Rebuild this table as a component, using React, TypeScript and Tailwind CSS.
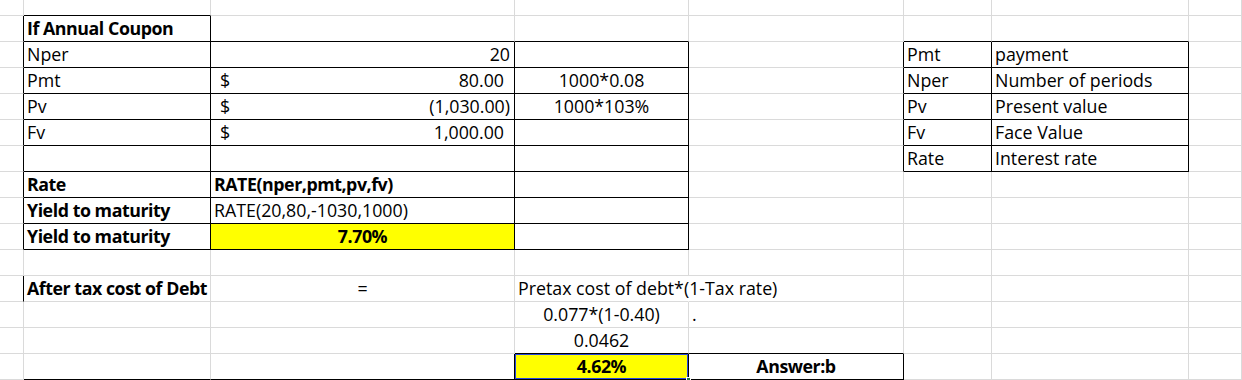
const COLS = [24, 187, 304, 174, 215, 88, 197, 53]
const ROWS = 15

type Cell = {
  text?: string
  money?: string
  align?: 'left' | 'right' | 'center'
  bold?: boolean
  yellow?: boolean
  pr?: string
}

const CELLS: Record<string, Cell> = {
  '1-1': { text: 'If Annual Coupon', bold: true },
  '2-1': { text: 'Nper' },
  '2-2': { text: '20', align: 'right', pr: 'pr-[4px]' },
  '3-1': { text: 'Pmt' },
  '3-2': { money: '80.00', pr: 'pr-[10px]' },
  '3-3': { text: '1000*0.08', align: 'center' },
  '4-1': { text: 'Pv' },
  '4-2': { money: '(1,030.00)', pr: 'pr-[4px]' },
  '4-3': { text: '1000*103%', align: 'center' },
  '5-1': { text: 'Fv' },
  '5-2': { money: '1,000.00', pr: 'pr-[10px]' },
  '7-1': { text: 'Rate', bold: true },
  '7-2': { text: 'RATE(nper,pmt,pv,fv)', bold: true },
  '8-1': { text: 'Yield to maturity', bold: true },
  '8-2': { text: 'RATE(20,80,-1030,1000)' },
  '9-1': { text: 'Yield to maturity', bold: true },
  '9-2': { text: '7.70%', bold: true, align: 'center', yellow: true },
  '11-1': { text: 'After tax cost of Debt', bold: true },
  '11-2': { text: '=', align: 'center' },
  '11-3': { text: 'Pretax cost of debt*(1-Tax rate)' },
  '12-3': { text: '0.077*(1-0.40)', align: 'center' },
  '12-4': { text: '.' },
  '13-3': { text: '0.0462', align: 'center' },
  '14-3': { text: '4.62%', bold: true, align: 'center', yellow: true },
  '14-4': { text: 'Answer:b', bold: true, align: 'center' },
  '2-5': { text: 'Pmt' },
  '2-6': { text: 'payment' },
  '3-5': { text: 'Nper' },
  '3-6': { text: 'Number of periods' },
  '4-5': { text: 'Pv' },
  '4-6': { text: 'Present value' },
  '5-5': { text: 'Fv' },
  '5-6': { text: 'Face Value' },
  '6-5': { text: 'Rate' },
  '6-6': { text: 'Interest rate' }
}

const between = (v: number, a: number, b: number) => v >= a && v <= b

// black right edge of cell (r, c)
function blackRight(r: number, c: number) {
  if (c === 0) return between(r, 1, 9) || r === 11
  if (c === 1) return between(r, 1, 9)
  if (c === 2 || c === 3) return between(r, 2, 9) || r === 14
  if (c === 4) return between(r, 2, 6) || r === 14
  if (c === 5 || c === 6) return between(r, 2, 6)
  return false
}

// black bottom edge of cell (r, c)
function blackBottom(r: number, c: number) {
  if (r === 0) return c === 1
  if (between(r, 1, 9) && between(c, 1, 3)) return true
  if (between(r, 1, 6) && (c === 5 || c === 6)) return true
  if (r === 13) return c === 3 || c === 4
  if (r === 14) return between(c, 1, 4)
  return false
}

function GridCell({ r, c }: { r: number; c: number }) {
  const cell = CELLS[`${r}-${c}`]
  const right = r === 11 && c === 3 ? 'border-r-transparent' : blackRight(r, c) ? 'border-r-black' : 'border-r-[#dadada]'
  const bottom = blackBottom(r, c) ? 'border-b-black' : 'border-b-[#dadada]'
  const selected = r === 14 && c === 3

  const align =
    cell?.align === 'right' ? 'justify-end' : cell?.align === 'center' ? 'justify-center' : 'justify-start'

  return (
    <div
      className={`relative flex border-r border-b ${right} ${bottom} ${cell?.yellow ? 'bg-[#ffff00]' : ''} ${
        selected ? 'shadow-[inset_0_0_0_1px_#2848e0]' : ''
      }`}
    >
      {cell?.money ? (
        <div className={`flex w-full justify-between pl-[9px] ${cell.pr}`}>
          <span>$</span>
          <span>{cell.money}</span>
        </div>
      ) : cell?.text ? (
        <div
          className={`flex w-full whitespace-nowrap ${align} ${cell.pr ?? 'px-[3px]'} ${
            cell.bold ? 'font-bold tracking-[-0.45px]' : ''
          }`}
        >
          {cell.text}
        </div>
      ) : null}
      {selected && <div className="absolute -right-[3px] -bottom-[3px] z-10 h-[5px] w-[5px] border border-white bg-[#217346]" />}
    </div>
  )
}

export default function App() {
  return (
    <div className="h-[380px] w-[1242px] overflow-hidden bg-white text-black">
      <div
        className="grid grid-cols-[24px_187px_304px_174px_215px_88px_197px_53px] grid-rows-[16px_repeat(14,26px)] text-[17.8px] leading-[25px]"
        style={{ fontFamily: '"Open Sans", "Noto Sans", sans-serif' }}
      >
        {Array.from({ length: ROWS }).map((_, r) =>
          COLS.map((_, c) => <GridCell key={`${r}-${c}`} r={r} c={c} />)
        )}
      </div>
    </div>
  )
}
